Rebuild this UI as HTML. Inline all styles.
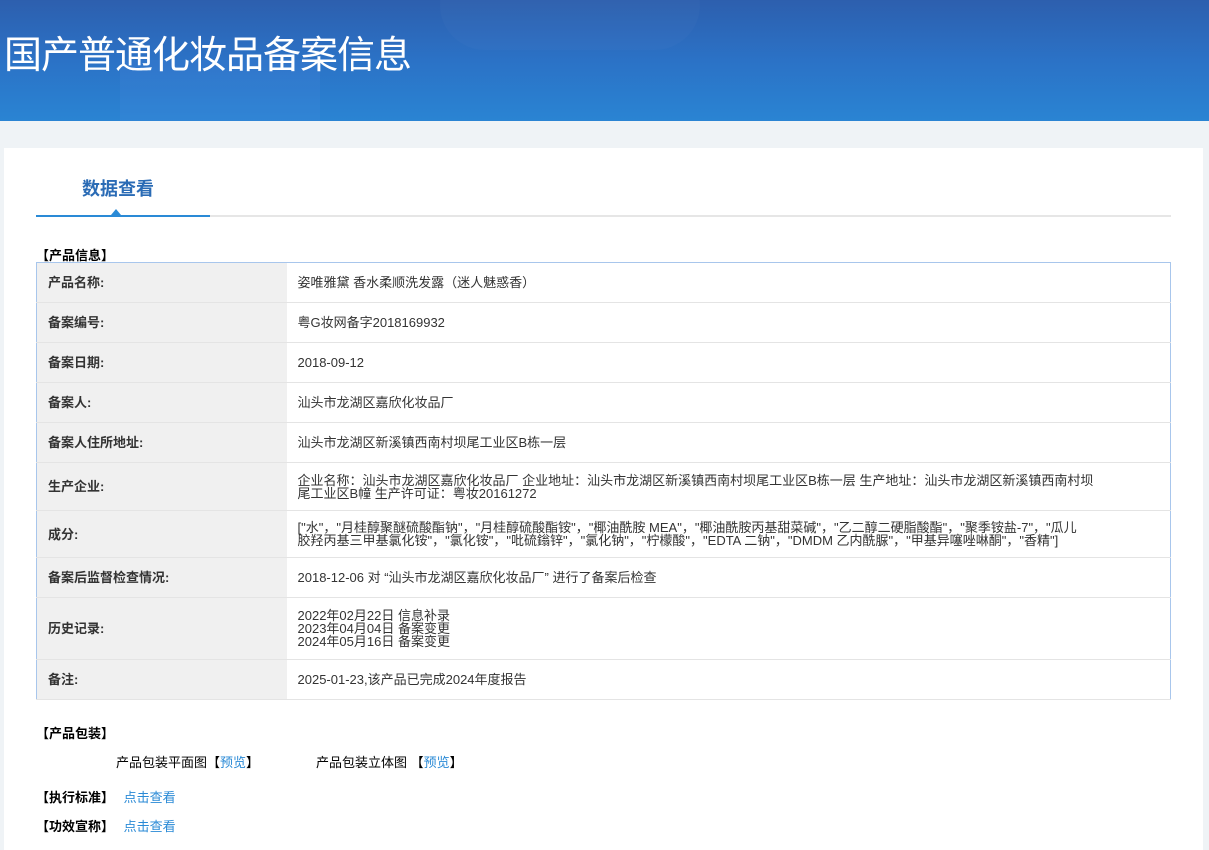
<!DOCTYPE html>
<html><head><meta charset="utf-8"><style>
*{margin:0;padding:0;box-sizing:border-box}
body{width:1209px;height:850px;overflow:hidden;background:#eff3f6;font-family:"Liberation Sans","Noto Sans CJK SC",sans-serif;font-size:13px;color:#333}
.hd{position:absolute;left:0;top:0;width:1209px;height:121px;background:linear-gradient(180deg,#2d5fae 0%,#2b72c6 50%,#2a84d3 100%);overflow:hidden}
.hd h1{position:absolute;left:4px;top:24px;font-size:38px;font-weight:normal;color:#fff;letter-spacing:-1px;font-family:"Noto Sans CJK SC",sans-serif}
.panel{position:absolute;left:4px;top:148px;width:1199px;height:702px;background:#fff}
.tab{position:absolute;left:82px;top:175px;font-size:18px;font-weight:bold;color:#2a6bb5}
.line{position:absolute;left:36px;top:215px;width:1135px;height:2px;background:#e6e6e6}
.line b{position:absolute;left:0;top:0;width:174px;height:2px;background:#2a8ad6}
.tri{position:absolute;left:111px;top:209px;width:0;height:0;border-left:5px solid transparent;border-right:5px solid transparent;border-bottom:6px solid #2a8ad6}
.sec{position:absolute;left:36px;font-weight:bold;color:#000;font-size:13px}
.sec a{margin-left:6px}
table{position:absolute;left:36px;top:262px;width:1135px;border-collapse:collapse;border:1px solid #a8c6ec}
td{border-bottom:1px solid #e4e4e4;padding:0 11px;vertical-align:middle;line-height:13px}
td.l{width:250px;background:#f0f0f0;font-weight:bold;color:#333}
a{color:#2a8ad6;text-decoration:none}
.t{position:absolute;font-size:13px;color:#000}
</style></head><body>
<div class="hd">
<div style="position:absolute;left:440px;top:-40px;width:260px;height:90px;border-radius:45px;background:rgba(255,255,255,.02)"></div>
<div style="position:absolute;left:120px;top:60px;width:200px;height:70px;background:rgba(90,140,230,.15)"></div>
<h1>国产普通化妆品备案信息</h1></div>
<div class="panel"></div>
<div class="tab">数据查看</div>
<div class="line"><b></b></div><div class="tri"></div>
<div class="sec" style="top:245px">【产品信息】</div>
<table>
<tr style="height:40px"><td class="l">产品名称:</td><td>姿唯雅黛 香水柔顺洗发露（迷人魅惑香）</td></tr>
<tr style="height:40px"><td class="l">备案编号:</td><td>粤G妆网备字2018169932</td></tr>
<tr style="height:40px"><td class="l">备案日期:</td><td>2018-09-12</td></tr>
<tr style="height:40px"><td class="l">备案人:</td><td>汕头市龙湖区嘉欣化妆品厂</td></tr>
<tr style="height:40px"><td class="l">备案人住所地址:</td><td>汕头市龙湖区新溪镇西南村坝尾工业区B栋一层</td></tr>
<tr style="height:48px"><td class="l">生产企业:</td><td>企业名称：汕头市龙湖区嘉欣化妆品厂 企业地址：汕头市龙湖区新溪镇西南村坝尾工业区B栋一层 生产地址：汕头市龙湖区新溪镇西南村坝<br>尾工业区B幢 生产许可证：粤妆20161272</td></tr>
<tr style="height:47px"><td class="l">成分:</td><td>["水"，"月桂醇聚醚硫酸酯钠"，"月桂醇硫酸酯铵"，"椰油酰胺 MEA"，"椰油酰胺丙基甜菜碱"，"乙二醇二硬脂酸酯"，"聚季铵盐-7"，"瓜儿<br>胶羟丙基三甲基氯化铵"，"氯化铵"，"吡硫鎓锌"，"氯化钠"，"柠檬酸"，"EDTA 二钠"，"DMDM 乙内酰脲"，"甲基异噻唑啉酮"，"香精"]</td></tr>
<tr style="height:40px"><td class="l">备案后监督检查情况:</td><td>2018-12-06 对 “汕头市龙湖区嘉欣化妆品厂” 进行了备案后检查</td></tr>
<tr style="height:62px"><td class="l">历史记录:</td><td>2022年02月22日 信息补录<br>2023年04月04日 备案变更<br>2024年05月16日 备案变更</td></tr>
<tr style="height:40px"><td class="l">备注:</td><td>2025-01-23,该产品已完成2024年度报告</td></tr>
</table>
<div class="sec" style="top:723px">【产品包装】</div>
<div class="t" style="left:116px;top:752px">产品包装平面图【<a>预览</a>】</div>
<div class="t" style="left:316px;top:752px">产品包装立体图 【<a>预览</a>】</div>
<div class="sec" style="top:787px">【执行标准】 <a style="font-weight:normal">点击查看</a></div>
<div class="sec" style="top:816px">【功效宣称】 <a style="font-weight:normal">点击查看</a></div>
</body></html>
